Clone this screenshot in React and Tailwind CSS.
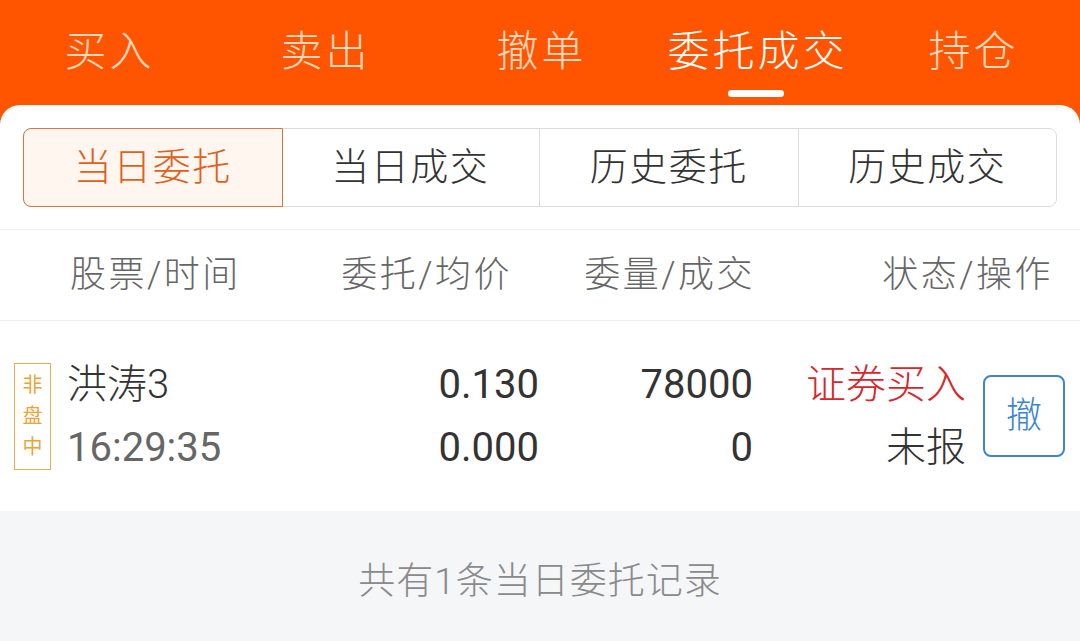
import React from 'react'

const topTabs = ['买入', '卖出', '撤单', '委托成交', '持仓']
const subTabs = ['当日委托', '当日成交', '历史委托', '历史成交']

export default function App() {
  return (
    <div className="w-[1080px] h-[641px] overflow-hidden bg-[#ff5500] flex flex-col font-['Roboto','Noto_Sans_CJK_SC',sans-serif] font-light">
      {/* top tabs */}
      <div className="flex h-[105px] shrink-0">
        {topTabs.map((t, i) => (
          <div key={t} className="flex-1 flex flex-col items-center pt-[24px]">
            <div className={`text-[42px] leading-[56px] tracking-[3px] pl-[3px] ${i === 3 ? 'text-white' : 'text-[#ffd8bd]'}`}>{t}</div>
            {i === 3 && <div className="mt-[10px] w-[56px] h-[7px] rounded-full bg-white" />}
          </div>
        ))}
      </div>

      <div className="flex-1 bg-white rounded-t-[20px] flex flex-col overflow-hidden">
        {/* segmented */}
        <div className="px-[23px] pt-[23px] pb-[22px] border-b border-[#efefef]">
          <div className="flex h-[79px] rounded-[8px] border border-[#dcdcdc]">
            {subTabs.map((t, i) => (
              <div
                key={t}
                className={
                  i === 0
                    ? 'flex-1 flex items-center justify-center -m-px rounded-l-[8px] border border-[#d2773d] bg-[#fff6f0] text-[#e0601c] text-[38px] tracking-[1.5px]'
                    : `flex-1 flex items-center justify-center text-[#333333] text-[38px] tracking-[1.5px] ${i > 1 ? 'border-l border-[#dcdcdc]' : ''}`
                }
              >
                {t}
              </div>
            ))}
          </div>
        </div>

        {/* header */}
        <div className="flex items-center h-[91px] border-b border-[#efefef] text-[36px] tracking-[2.5px] text-[#666666] shrink-0">
          <div className="w-[300px] pl-[70px]">股票/时间</div>
          <div className="w-[212px] text-right">委托/均价</div>
          <div className="w-[243px] text-right">委量/成交</div>
          <div className="flex-1 text-right pr-[27px]">状态/操作</div>
        </div>

        {/* row */}
        <div className="flex items-center h-[190px] shrink-0">
          <div className="ml-[14px] w-[37px] h-[107px] border border-[#e9ad4c] flex flex-col items-center justify-center text-[20px] leading-[31px] font-normal text-[#e9a43a]">
            <span>非</span>
            <span>盘</span>
            <span>中</span>
          </div>
          <div className="ml-[16px] w-[180px] text-[40px] leading-[63px]">
            <div className="text-[#333333]">洪涛3</div>
            <div className="text-[#666666] font-normal">16:29:35</div>
          </div>
          <div className="w-[292px] text-right text-[40px] leading-[63px] font-normal text-[#333333]">
            <div>0.130</div>
            <div>0.000</div>
          </div>
          <div className="w-[214px] text-right text-[40px] leading-[63px] font-normal text-[#333333]">
            <div>78000</div>
            <div>0</div>
          </div>
          <div className="w-[213px] text-right text-[40px] leading-[63px]">
            <div className="text-[#d7262c]">证券买入</div>
            <div className="text-[#333333]">未报</div>
          </div>
          <div className="ml-[17px] w-[82px] h-[82px] rounded-[8px] border-2 border-[#3d84d2] flex items-center justify-center text-[36px] text-[#3d84d2]">
            撤
          </div>
        </div>

        {/* footer */}
        <div className="flex-1 bg-[#f5f6f8] flex items-center justify-center pt-[12px] text-[37px] tracking-[1px] text-[#8a8a8a]">
          共有1条当日委托记录
        </div>
      </div>
    </div>
  )
}
